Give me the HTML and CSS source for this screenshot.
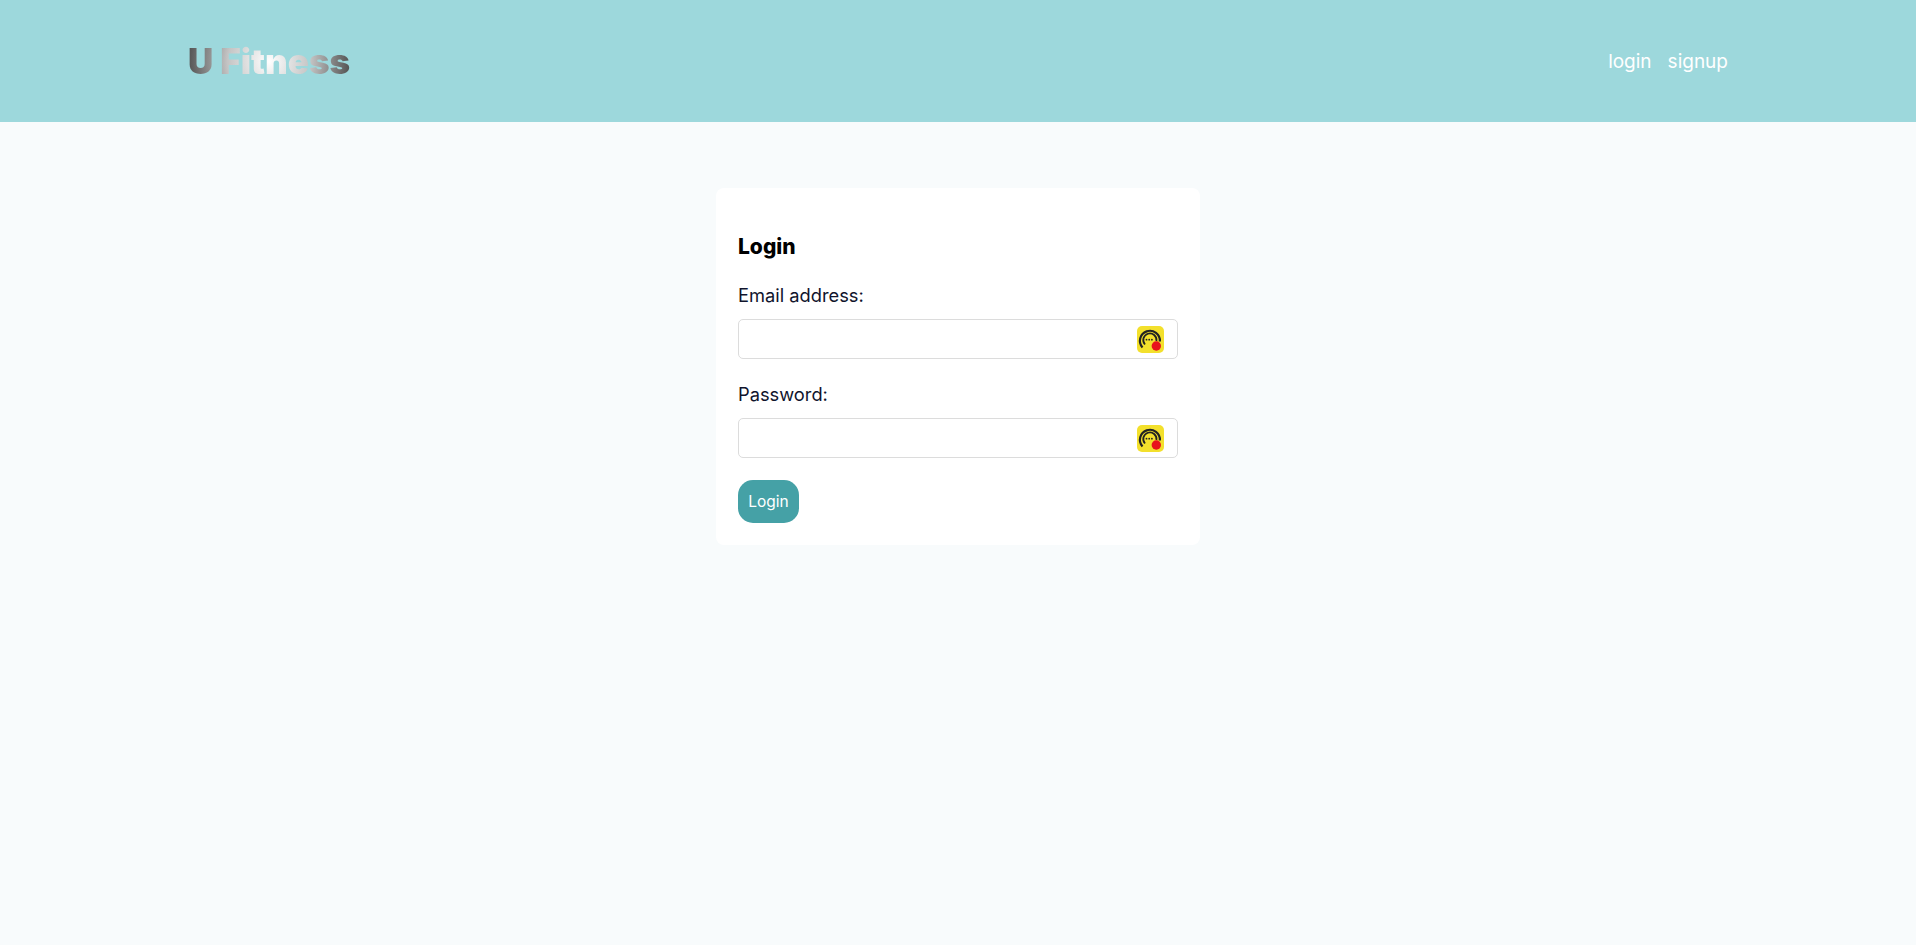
FILE: index.html
```html
<!DOCTYPE html>
<html lang="en">
<head>
    <meta charset="UTF-8">
    <meta name="viewport" content="width=device-width, initial-scale=1.0">
    <title>U Fitness</title>
    <link rel="stylesheet" href="styles.css">
</head>
<body>
    <!-- Header -->
    <header class="site-header">
        <div class="header-inner">
            <h1 class="logo">U Fitness</h1>
            <nav class="nav-links">
                <a href="#">login</a>
                <a href="#">signup</a>
            </nav>
        </div>
    </header>

    <!-- Login Form -->
    <main class="page-content">
        <form class="login-card">
            <h3>Login</h3>
            <label for="email">Email address:</label>
            <div class="input-wrap">
                <input type="email" id="email">
                <svg class="input-badge" viewBox="0 0 27 27">
                    <rect width="27" height="27" rx="5" fill="#f3e02c"/>
                    <path d="M5.5 21.5a10 10 0 1 1 17.4-6" fill="none" stroke="#222" stroke-width="2.2"/>
                    <path d="M8 18.5a6.6 6.6 0 1 1 11.4-3.5" fill="none" stroke="#222" stroke-width="1.8"/>
                    <circle cx="9.5" cy="13.7" r=".9" fill="#222"/>
                    <circle cx="12.2" cy="13.7" r=".9" fill="#222"/>
                    <circle cx="14.9" cy="13.7" r=".9" fill="#222"/>
                    <circle cx="19.3" cy="20" r="4.7" fill="#e8141c"/>
                </svg>
            </div>
            <label for="password">Password:</label>
            <div class="input-wrap">
                <input type="password" id="password">
                <svg class="input-badge" viewBox="0 0 27 27">
                    <rect width="27" height="27" rx="5" fill="#f3e02c"/>
                    <path d="M5.5 21.5a10 10 0 1 1 17.4-6" fill="none" stroke="#222" stroke-width="2.2"/>
                    <path d="M8 18.5a6.6 6.6 0 1 1 11.4-3.5" fill="none" stroke="#222" stroke-width="1.8"/>
                    <circle cx="9.5" cy="13.7" r=".9" fill="#222"/>
                    <circle cx="12.2" cy="13.7" r=".9" fill="#222"/>
                    <circle cx="14.9" cy="13.7" r=".9" fill="#222"/>
                    <circle cx="19.3" cy="20" r="4.7" fill="#e8141c"/>
                </svg>
            </div>
            <button type="button" class="login-btn">Login</button>
        </form>
    </main>
</body>
</html>
```

FILE: styles.css
```css
* {
    box-sizing: border-box;
    margin: 0;
    padding: 0;
}
body {
    font-family: 'Inter', 'Open Sans', sans-serif;
    background-color: #f8fbfc;
    min-height: 100vh;
}
.site-header {
    height: 122px;
    background-color: #9dd8dc;
}
.header-inner {
    width: 1540px;
    height: 100%;
    margin: 0 auto;
    display: flex;
    justify-content: space-between;
    align-items: center;
}
.logo {
    font-size: 35px;
    font-weight: 900;
    line-height: 1;
    background: radial-gradient(circle, #fff 0%, #c4c4c4 50%, #4e4e4e 100%);
    -webkit-background-clip: text;
    background-clip: text;
    color: transparent;
}
.nav-links {
    display: flex;
    gap: 16px;
}
.nav-links a {
    color: white;
    font-size: 19px;
    text-decoration: none;
}
.page-content {
    display: flex;
    justify-content: center;
    padding-top: 66px;
}
.login-card {
    width: 484px;
    background-color: white;
    border-radius: 8px;
    padding: 44px 22px 22px;
}
.login-card h3 {
    font-size: 21px;
    font-weight: 800;
    line-height: 30px;
    color: #000;
    margin-bottom: 20px;
}
.login-card label {
    display: block;
    font-size: 18.3px;
    line-height: 27px;
    color: #10142c;
    margin-bottom: 10px;
}
.input-wrap {
    position: relative;
    margin-bottom: 22px;
}
.input-wrap input {
    display: block;
    width: 100%;
    height: 40px;
    border: 1px solid #dcdcdc;
    border-radius: 5px;
    background-color: white;
}
.input-badge {
    position: absolute;
    top: 7px;
    right: 14px;
    width: 27px;
    height: 27px;
}
.login-btn {
    display: block;
    width: 61px;
    height: 43px;
    font-family: inherit;
    font-size: 15.5px;
    font-weight: 400;
    color: white;
    background-color: #45a1a6;
    border: none;
    border-radius: 15px;
    cursor: pointer;
}
```
